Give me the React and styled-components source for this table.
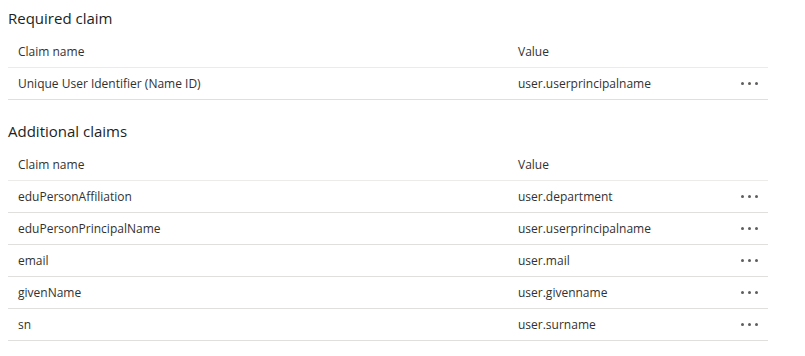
import React from "react";
import styled, { createGlobalStyle } from "styled-components";

const GlobalStyle = createGlobalStyle`
	body {
		margin: 0;
		background: #ffffff;
		font-family: "Open Sans", "Noto Sans", sans-serif;
		color: #323130;
	}
`;

const required = [
	{ name: "Unique User Identifier (Name ID)", value: "user.userprincipalname" },
];

const additional = [
	{ name: "eduPersonAffiliation", value: "user.department" },
	{ name: "eduPersonPrincipalName", value: "user.userprincipalname" },
	{ name: "email", value: "user.mail" },
	{ name: "givenName", value: "user.givenname" },
	{ name: "sn", value: "user.surname" },
];

const ClaimTable = ({ title, rows }) => (
	<Section>
		<Heading>{title}</Heading>
		<HeaderRow>
			<Cell>Claim name</Cell>
			<Cell>Value</Cell>
			<Cell />
		</HeaderRow>
		{rows.map((r) => (
			<Row key={r.name}>
				<Cell>{r.name}</Cell>
				<Cell>{r.value}</Cell>
				<More aria-label="More actions">
					<Dot />
					<Dot />
					<Dot />
				</More>
			</Row>
		))}
	</Section>
);

const App = () => {
	return (
		<Page>
			<GlobalStyle />
			<ClaimTable title="Required claim" rows={required} />
			<ClaimTable title="Additional claims" rows={additional} />
		</Page>
	);
};

export default App;

const Page = styled.div`
	width: 760px;
	padding: 7px 8px 0;
	display: flex;
	flex-direction: column;
	gap: 20px;
`;

const Section = styled.section`
	display: flex;
	flex-direction: column;
`;

const Heading = styled.h2`
	margin: 0 0 7px;
	font-size: 15px;
	line-height: 22px;
	font-weight: 400;
	color: #201f1e;
`;

const Row = styled.div`
	display: grid;
	grid-template-columns: 500px 220px 40px;
	align-items: center;
	height: 32px;
	border-bottom: 1px solid #e1dfdd;
	box-sizing: border-box;
	font-size: 12px;
`;

const HeaderRow = styled(Row)`
	border-bottom-color: #edebe9;
`;

const Cell = styled.div`
	padding-left: 10px;
	white-space: nowrap;
`;

const More = styled.div`
	display: flex;
	justify-content: center;
	gap: 4px;
	padding-left: 2px;
`;

const Dot = styled.span`
	width: 3px;
	height: 3px;
	border-radius: 50%;
	background: #605e5c;
`;
